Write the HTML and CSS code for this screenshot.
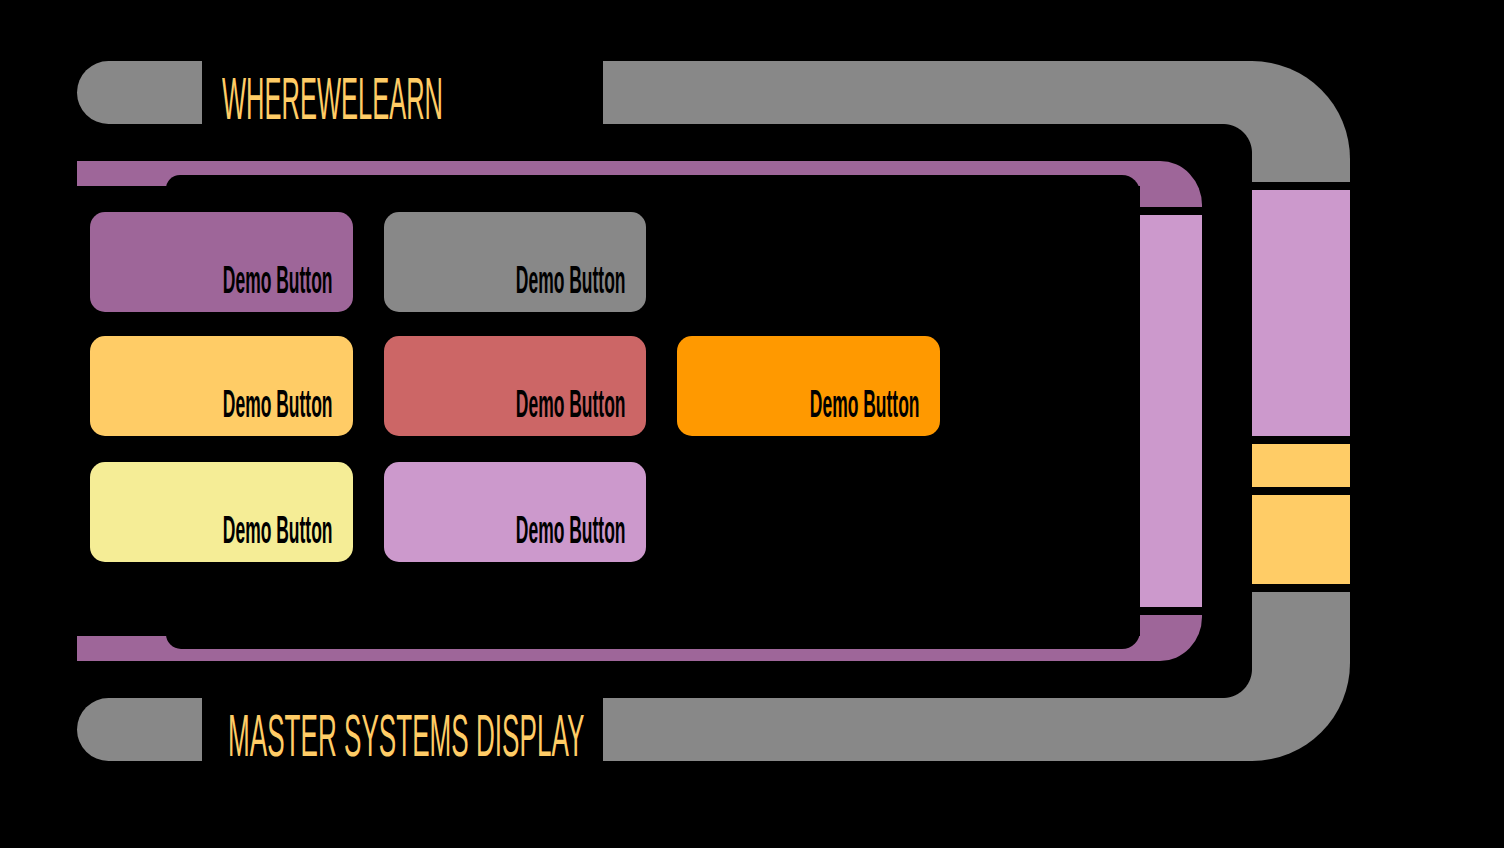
FILE: index.html
```html
<!DOCTYPE html>
<html lang="en">
<head>
    <meta charset="UTF-8">
    <meta name="viewport" content="width=device-width, initial-scale=1.0">
    <title>Master Systems Display</title>
    <link rel="stylesheet" href="styles.css">
</head>
<body>
    <div class="lcars">
        <div class="head">
            <div class="pill"></div>
            <div class="title"><span>WHEREWELEARN</span></div>
            <div class="bar"></div>
        </div>

        <div class="side">
            <div class="side-block corner-top"></div>
            <div class="side-block lilac tall"></div>
            <div class="side-block sunflower short"></div>
            <div class="side-block sunflower mid"></div>
            <div class="side-block corner-bottom"></div>
        </div>

        <div class="middle">
            <div class="frame">
                <div class="frame-body">
                    <div class="panel"></div>
                    <div class="content">
                        <div class="button-row">
                            <div class="button violet"><span>Demo Button</span></div>
                            <div class="button gray"><span>Demo Button</span></div>
                        </div>
                        <div class="button-row">
                            <div class="button sunflower"><span>Demo Button</span></div>
                            <div class="button red"><span>Demo Button</span></div>
                            <div class="button orange"><span>Demo Button</span></div>
                        </div>
                        <div class="button-row last">
                            <div class="button pale"><span>Demo Button</span></div>
                            <div class="button lilac"><span>Demo Button</span></div>
                        </div>
                    </div>
                </div>
                <div class="frame-side">
                    <div class="elbow elbow-top"></div>
                    <div class="frame-column"></div>
                    <div class="elbow elbow-bottom"></div>
                </div>
            </div>
            <div class="gutter">
                <div class="fillet fillet-top"></div>
                <div class="fillet fillet-bottom"></div>
            </div>
        </div>

        <div class="head foot">
            <div class="pill"></div>
            <div class="title"><span>MASTER SYSTEMS DISPLAY</span></div>
            <div class="bar"></div>
        </div>
    </div>
</body>
</html>
```

FILE: styles.css
```css
body {
    margin: 0;
    background-color: #000;
    font-family: "Liberation Sans", Arial, sans-serif;
    height: 100vh;
    overflow: hidden;
}
.lcars {
    display: grid;
    grid-template-columns: 1175px 98px;
    grid-template-rows: 63px 1fr 63px;
    height: 700px;
    margin: 61px 0 0 77px;
    width: 1273px;
}

/* header / footer rows */
.head {
    display: flex;
    grid-column: 1;
}
.foot {
    grid-row: 3;
}
.pill {
    width: 125px;
    flex-shrink: 0;
    background-color: #888;
    border-radius: 32px 0 0 32px;
}
.title {
    width: 401px;
    flex-shrink: 0;
    box-sizing: border-box;
    padding: 8px 0 0 20px;
    white-space: nowrap;
    color: #FFCC66;
    font-size: 60px;
    line-height: 60px;
}
.foot .title {
    padding-left: 26px;
}
.title span {
    display: inline-block;
    transform: scaleX(0.425);
    transform-origin: left center;
}
.foot .title span {
    transform: scaleX(0.435);
}
.bar {
    flex: 1;
    background-color: #888;
}

/* right hand column */
.side {
    grid-column: 2;
    grid-row: 1 / 4;
    display: flex;
    flex-direction: column;
    gap: 8px;
}
.side-block { background-color: #888; }
.corner-top { height: 121px; border-top-right-radius: 116px; }
.corner-bottom { flex: 1; border-bottom-right-radius: 114px; }
.side-block.tall { height: 246px; }
.side-block.short { height: 43px; }
.side-block.mid { height: 89px; }
.side-block.lilac { background-color: #CC99CC; }
.side-block.sunflower { background-color: #FFCC66; }

/* middle area */
.middle {
    grid-column: 1;
    grid-row: 2;
    display: flex;
}
.gutter {
    flex: 1;
    display: flex;
    flex-direction: column;
    justify-content: space-between;
    align-items: flex-end;
}
.fillet {
    width: 29px;
    height: 29px;
}
.fillet-top {
    background: radial-gradient(circle at 0 100%, #000 28.5px, #888 29.5px);
}
.fillet-bottom {
    background: radial-gradient(circle at 0 0, #000 28.5px, #888 29.5px);
}

/* inner purple frame */
.frame {
    display: flex;
    width: 1125px;
    margin: 37px 0;
}
.frame-body {
    flex: 1;
    display: grid;
    grid-template-columns: 89px 1fr;
    grid-template-rows: 14px 11px 1fr 13px 12px;
    background-color: #9E6699;
}
.panel {
    grid-column: 2;
    grid-row: 2 / 5;
    background-color: #000;
    border-radius: 14px 18px 18px 15px;
}
.content {
    grid-column: 1 / 3;
    grid-row: 3;
    background-color: #000;
    padding: 26px 0 0 13px;
    display: flex;
    flex-direction: column;
    gap: 24px;
}
.frame-side {
    width: 62px;
    display: flex;
    flex-direction: column;
    gap: 8px;
}
.elbow {
    height: 46px;
    background-color: #9E6699;
}
.elbow-top { border-top-right-radius: 42px 44px; }
.elbow-bottom { border-bottom-right-radius: 42px 44px; }
.frame-column {
    flex: 1;
    background-color: #CC99CC;
}

/* buttons */
.button-row {
    display: flex;
    gap: 31px;
}
.button-row.last {
    margin-top: 2px;
}
.button {
    width: 262.5px;
    height: 100px;
    box-sizing: border-box;
    border-radius: 15px;
    display: flex;
    justify-content: flex-end;
    align-items: flex-end;
    padding: 0 20px 13px 0;
    color: #000;
    font-size: 38px;
    font-weight: bold;
    line-height: 38px;
    white-space: nowrap;
    cursor: pointer;
}
.button span {
    display: inline-block;
    transform: scaleX(0.46);
    transform-origin: right center;
}
.button.violet { background-color: #9E6699; }
.button.gray { background-color: #888; }
.button.sunflower { background-color: #FFCC66; }
.button.red { background-color: #CC6666; }
.button.orange { background-color: #FF9900; }
.button.pale { background-color: #F5ED96; }
.button.lilac { background-color: #CC99CC; }
```
